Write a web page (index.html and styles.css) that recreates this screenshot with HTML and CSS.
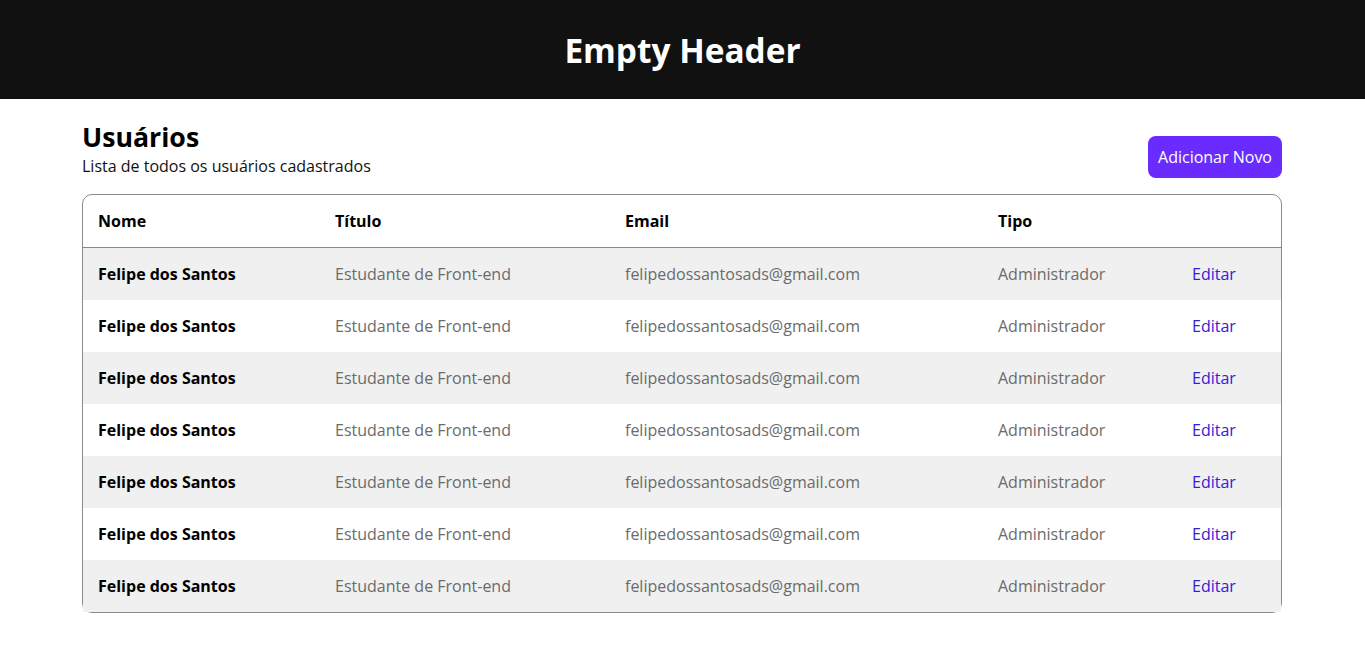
FILE: index.html
```html
<!DOCTYPE html>
<html lang="pt-BR">
<head>
<meta charset="utf-8">
<title>Usuários</title>
<link rel="stylesheet" href="styles.css">
</head>
<body>
<header class="topbar"><h1 class="topbar-title">Empty Header</h1></header>
<main class="container">
  <div class="page-head">
    <div class="page-titles">
      <h2 class="page-title">Usuários</h2>
      <p class="page-sub">Lista de todos os usuários cadastrados</p>
    </div>
    <button class="btn-add">Adicionar Novo</button>
  </div>
  <table class="users">
    <colgroup>
      <col class="c1"><col class="c2"><col class="c3"><col class="c4"><col class="c5">
    </colgroup>
    <thead>
      <tr><th>Nome</th><th>Título</th><th>Email</th><th>Tipo</th><th></th></tr>
    </thead>
    <tbody>
      <tr><td class="name">Felipe dos Santos</td><td>Estudante de Front-end</td><td>felipedossantosads@gmail.com</td><td>Administrador</td><td><a class="edit" href="#">Editar</a></td></tr>
      <tr><td class="name">Felipe dos Santos</td><td>Estudante de Front-end</td><td>felipedossantosads@gmail.com</td><td>Administrador</td><td><a class="edit" href="#">Editar</a></td></tr>
      <tr><td class="name">Felipe dos Santos</td><td>Estudante de Front-end</td><td>felipedossantosads@gmail.com</td><td>Administrador</td><td><a class="edit" href="#">Editar</a></td></tr>
      <tr><td class="name">Felipe dos Santos</td><td>Estudante de Front-end</td><td>felipedossantosads@gmail.com</td><td>Administrador</td><td><a class="edit" href="#">Editar</a></td></tr>
      <tr><td class="name">Felipe dos Santos</td><td>Estudante de Front-end</td><td>felipedossantosads@gmail.com</td><td>Administrador</td><td><a class="edit" href="#">Editar</a></td></tr>
      <tr><td class="name">Felipe dos Santos</td><td>Estudante de Front-end</td><td>felipedossantosads@gmail.com</td><td>Administrador</td><td><a class="edit" href="#">Editar</a></td></tr>
      <tr><td class="name">Felipe dos Santos</td><td>Estudante de Front-end</td><td>felipedossantosads@gmail.com</td><td>Administrador</td><td><a class="edit" href="#">Editar</a></td></tr>
    </tbody>
  </table>
</main>
</body>
</html>
```
FILE: styles.css
```css
* { box-sizing: border-box; }
html, body { margin: 0; padding: 0; }
body {
  font-family: "Open Sans", "Noto Sans", sans-serif;
  color: #000;
  background: #fff;
}
.topbar {
  height: 99px;
  background: #111111;
  display: flex;
  align-items: center;
  justify-content: center;
}
.topbar-title {
  margin: 0;
  color: #fff;
  font-size: 33.4px;
  font-weight: 700;
}
.container {
  width: 1201px;
  margin: 0 auto;
  padding: 19px 1px 0 0;
}
.page-head {
  display: flex;
  justify-content: space-between;
  align-items: flex-end;
  margin-bottom: 17px;
}
.page-title {
  margin: 0;
  font-size: 26.7px;
  font-weight: 700;
  line-height: normal;
}
.page-sub {
  margin: 0;
  font-size: 16px;
  line-height: normal;
  color: #111;
}
.btn-add {
  height: 42px;
  padding: 0 10px;
  border: none;
  border-radius: 8px;
  background: #6a2bff;
  color: #fff;
  font-family: inherit;
  font-size: 16px;
  margin-bottom: -1px;
}
.users {
  width: 1200px;
  table-layout: fixed;
  border-collapse: separate;
  border-spacing: 0;
  border: 1px solid #8a8a8a;
  border-radius: 10px;
  font-size: 16px;
}
.c1 { width: 237px; }
.c2 { width: 290px; }
.c3 { width: 373px; }
.c4 { width: 194px; }
.c5 { width: 104px; }
.users th {
  height: 53px;
  text-align: left;
  font-weight: 700;
  padding: 0 15px;
  border-bottom: 1px solid #8a8a8a;
}
.users td {
  height: 52px;
  padding: 0 15px;
  color: #6b6b6b;
  white-space: nowrap;
}
.users tbody tr:nth-child(odd) td { background: #f0f0f0; }
.users td.name { color: #000; font-weight: 700; }
.edit { color: #3320d8; text-decoration: none; }
```
